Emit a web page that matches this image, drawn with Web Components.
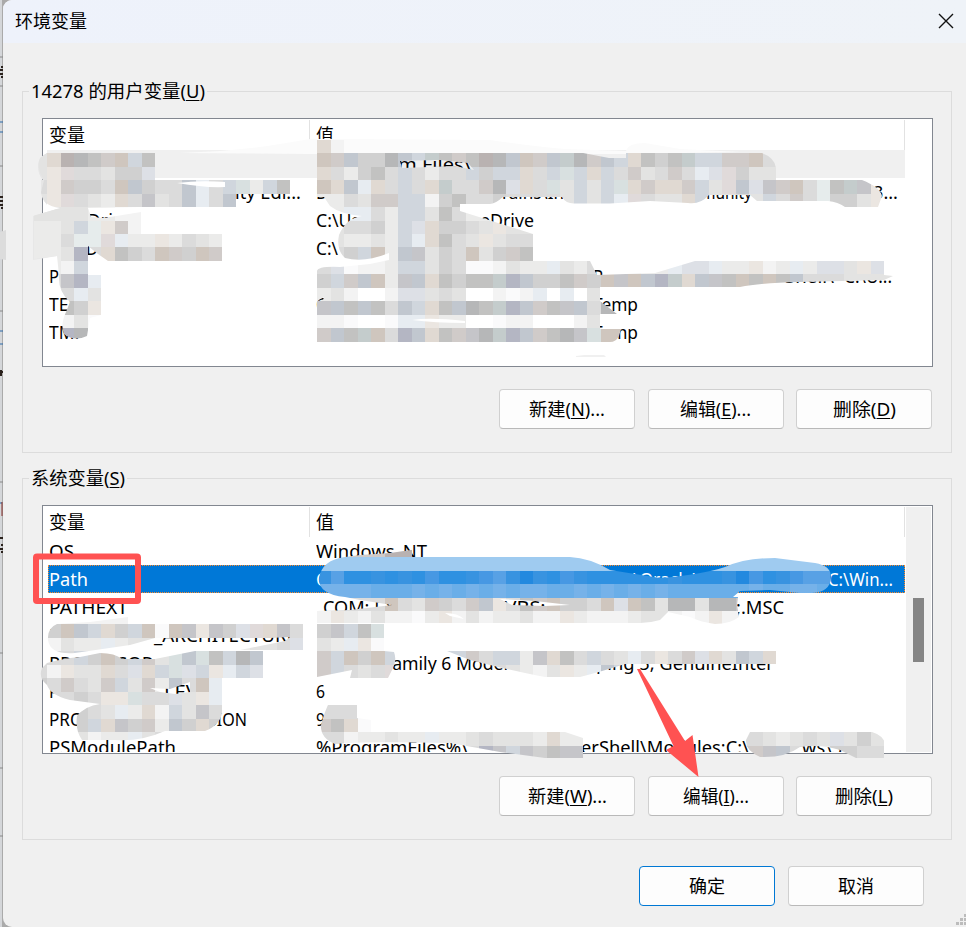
<!DOCTYPE html>
<html lang="zh-CN">
<head>
<meta charset="utf-8">
<title>环境变量</title>
<style>
html,body{margin:0;width:966px;height:927px;overflow:hidden;background:#b9b9bb}
body{font:18px/28px "Noto Sans","Noto Sans CJK SC",sans-serif;color:#000}
</style>
</head>
<body>
<env-dialog></env-dialog>
<script>
const attach = (el, html) => { el.attachShadow({mode:'open'}).innerHTML = html; return el.shadowRoot; };

/* A run of text fitted to the width given in its w attribute. */
customElements.define('fit-text', class extends HTMLElement {
  connectedCallback() {
    if (this.shadowRoot) return;
    const root = attach(this, `<style>:host{display:block;flex:none;white-space:pre;height:28px;line-height:28px}
      span{display:inline-block;transform-origin:0 50%}</style><span><slot></slot></span>`);
    const w = parseFloat(this.getAttribute('w'));
    if (w) {
      this.style.width = w + 'px';
      const s = root.querySelector('span');
      s.style.transform = `scaleX(${w / s.getBoundingClientRect().width})`;
    }
  }
});

customElements.define('push-button', class extends HTMLElement {
  connectedCallback() {
    if (this.shadowRoot) return;
    attach(this, `<style>
      :host{display:flex;box-sizing:border-box;width:136px;height:40px;border:1px solid #d0d0d0;border-bottom-color:#b9b9b9;border-radius:4px;background:#fdfdfd;align-items:center;justify-content:center}
      :host([primary]){border-color:#0078d4}
      u{text-decoration-thickness:1px;text-underline-offset:2px}
      </style><fit-text w="${this.getAttribute('w')}">${this.getAttribute('label')}${this.hasAttribute('key') ? `(<u>${this.getAttribute('key')}</u>)` : ''}${this.getAttribute('tail') || ''}</fit-text>`);
  }
});

/* Titled frame. */
customElements.define('group-box', class extends HTMLElement {
  connectedCallback() {
    if (this.shadowRoot) return;
    attach(this, `<style>
      :host{display:block;box-sizing:border-box;height:387px;padding-top:13px}
      .frame{box-sizing:border-box;height:362px;border:1px solid #dcdcdc;padding:0 19px}
      .legend{display:flex;width:fit-content;height:28px;margin:-15px 0 0 -13px;padding:0 2px 0 2px;background:#f0f0f0}
      .list{margin-top:13px;height:249px;display:block}
      .frame{display:flow-root}
      .buttons{display:flex;gap:12.5px;justify-content:flex-end;margin-top:22px}
      u{text-decoration-thickness:1px;text-underline-offset:2px}
      </style><div class="frame"><div class="legend"><fit-text w="${this.getAttribute('w')}">${this.getAttribute('label')}(<u>${this.getAttribute('key')}</u>)</fit-text></div>
      <div class="list"><slot></slot></div><div class="buttons"><slot name="buttons"></slot></div></div>`);
  }
});

/* Cells are lists of fragments: [left edge, text, width]. */
const USER_ROWS = [
  {hot:1, f:[[399,'m Files\\',73],[609,'ID',18]]},
  {f:[[236,'ity Edi...',66],[317,'D',12],[503,'rains\\In',62],[702,'munity',51],[874,'3...',25]]},
  {f:[[88,'Dri',26],[317,'C:\\Us',44],[481,'eDrive',54]]},
  {f:[[87,'D',12],[317,'C:\\',22]]},
  {f:[[50,'P',10],[594,'P',10],[786,'Shell\\',49],[845,'C:\\U...',48]]},
  {f:[[50,'TEMP',46],[317,'C',11],[594,'Temp',45]]},
  {f:[[50,'TMP',36],[594,'Temp',45]]}
];
const SYS_ROWS = [
  {f:[[50,'OS',25],[317,'Windows_NT',111]]},
  {sel:1,f:[[50,'Path',39],[317,'C',11],[634,'\\Oracle\\',66],[829,'C:\\Win...',65]]},
  {f:[[50,'PATHEXT',79],[320,'.COM;.EX',76],[496,';.VBS;.',56],[737,';.MSC',48]]},
  {f:[[50,'P',10],[155,'_ARCHITECTURE',143]]},
  {f:[[50,'PROCESSOR',104],[384,'Family 6 Model',125],[597,'ping 5, GenuineIntel',175]]},
  {f:[[50,'P',10],[165,'LEV',34],[317,'6',9]]},
  {f:[[50,'PROC',45],[209,'SION',39],[317,'9',9]]},
  {f:[[50,'PSModulePath',127],[317,'%ProgramFiles%\\',152],[582,'erShell\\Modules;C:\\',168],[803,'ws\\S',40]]}
];

customElements.define('variable-list', class extends HTMLElement {
  connectedCallback() {
    if (this.shadowRoot) return;
    const sys = this.getAttribute('kind') === 'system';
    const row = r => {
      let x = 43.6;
      return `<div class="row ${r.hot ? 'hot' : ''} ${r.sel ? 'sel' : ''}">` + r.f.map(([l, t, w]) => {
        const m = l - x; x = l + w;
        return `<fit-text w="${w}" style="margin-left:${m}px">${t}</fit-text>`;
      }).join('') + '</div>';
    };
    attach(this, `<style>
      :host{display:flex;box-sizing:border-box;width:891px;height:249px;border:1px solid #828790;background:#fff;overflow:hidden}
      .main{width:862px;height:247px;overflow:hidden}
      .head{display:grid;grid-template-columns:260px 1fr;height:30px;margin-top:1px;line-height:30px;padding-left:6px;border-right:1px solid #e2e2e2;box-sizing:border-box}
      .head div+div{border-left:1px solid #e2e2e2;padding-left:6px}
      .head div{height:30px}
      .rows{height:215px;overflow:hidden}
      .row{display:flex;height:28px;width:862px}
      .hot{background:linear-gradient(90deg,transparent 4px,#f0f0f0 4px)}
      .sel{color:#fff;background:linear-gradient(90deg,transparent 5px,#0078d7 5px);position:relative}
      .sel::after{content:"";position:absolute;inset:0 0 0 5px;border:1px dotted #ff8a28}
      .bar{width:25px;height:245px;margin:1px 0 0 1px;background:#f0f0f0;display:flex;justify-content:center}
      .thumb{width:11px;height:64px;background:#858585;margin:91px 0 0 0}
      </style><div class="main"><div class="head"><div>变量</div><div>值</div></div><div class="rows">${(sys ? SYS_ROWS : USER_ROWS).map(row).join('')}</div></div>
      ${sys ? '<div class="bar"><div class="thumb"></div></div>' : ''}`);
  }
});

/* Mosaic brush strokes over private values, and the red markers. */
const PAL = {a:'#c2c2c1',b:'#b6b7b8',c:'#c5c5c9',d:'#d0d0d0',e:'#dbdbdb',f:'#e3e3e2',g:'#ebebea',h:'#f3f3f3',i:'#fafafb',w:'#ffffff',
  t:'#cfc6be',u:'#e0d9d2',v:'#ebe6e1',p:'#b9b2b1',q:'#d0cbc9',r:'#e0dada',
  B:'#b4b6c3',C:'#c1c7cf',D:'#d0d6dd',E:'#dde0e6',F:'#e7ecf1',G:'#c4cccc',H:'#d8e0e0',K:'#e6ecec',
  0:'#9fcbf0',1:'#3893e0',2:'#58a1e5',3:'#2f91e1',4:'#2389df',5:'#6aaee8',6:'#76b2e9',7:'#4798e3'};
const TILES = [
  [0,-1,'fupbaqtDa'],[1,-1,'fvreefddE'],[2,-1,'evqddetCdeeCFeDHgDa'],[3,-1,'fvrefguecfeCFeC'],[4,-1,'ffffgghh'],
  [5,-1,'ggfDKvqh'],[6,-1,'ggeKKrFggvgefg'],[7,-1,'ggfBeuadetqdtq'],[8,0,'ghDh'],[9,0,'ecBF'],[10,0,'eeFf'],[11,0,'eadv'],[12,0,'ihfi'],[13,0,'eBb'],
  [-1,20,'uh'],[0,20,'tqCddbCDGaqapbCtqCGbqCDuadaGDDqqte'],
  [1,20,'uegdaeDegeeDdDDueDHDuDeqfeqeFErdff'],
  [2,20,'tuCFueDeuGeeqbEueHfDfDHuquuqDfrCEcqteKaGcv'],
  [3,20,'ggefqqDDhdaeedeeeefDfDFreffuDffefDeqeKddfv'],
  [4,20,'ggFFegDDfaegg'],[5,20,'ffeedgDEuddefvffh'],[6,20,'ffggfgDFuaefvfeei'],[7,20,'eedDtgCcfdetfdqai'],
  [8,20,'eEihhgDDfdeiihfggFfgefffggFEEFggvhgFgEEfvE'],
  [9,20,'dDqCtgcCuadaaGBCddaqdtctCBGuCcatataCeeeffff'],
  [10,20,'gfhwwhEEfefwwhihFwFwfff'],[11,20,'cCaCaeCDuaCbaGBCqacCebb'],[12,20,'hhiwwiFFvggwwihhwwwhf'],[13,20,'qCaGteBCuaqcbGBCqabcHtt'],
  [34,-1,'hhhhhhh'],[35,-1,'ddtCDudDtitcvcdEruceE'],[36,-1,'hhfggFgffhhgfefgffeE'],
  [37,-1,'eeeDdtdDqfHCHaDbC'],[38,-1,'ehvffueEuDHEDvFDE'],[39,-1,'deqefqDfqgCetF'],[40,-1,'eeedevvHeeEfvF'],[41,-1,'eeedefFguhDfce'],[42,-1,'eeedDucdqgCdud'],[43,-1,'eeefhggFfefgg'],
  [29,22,'qqqpp'],[30,20,'0000000000000000000000000000000000000000'],[31,20,'1233131373317214137133333313331473172213'],[32,20,'6666555656565656655656565655555565566563'],
  [33,20,'eeeeetefqdeqCveaqtddetEtafbbfbbce'],[34,20,'hvghfhhigvhfhggfhhvghhhgffhihvhhh'],
  [35,20,'dcDaH'],[36,20,'fgFvi'],[37,20,'qDtdtDDdDDDqeDDgcuaeDefFeveqEufCDu'],[38,20,'qDeferDDeeeeeefghfvgFCDgeefeeeeeee'],
  [41,20,'eeei'],[42,20,'qauiii'],[43,20,'eehggfggFggfefffgugg'],[44,20,'eeeeeeeeeeeeBcDcdacc'],
  [41,51,'g'],[43,51,'eefgfefEfdf'],[44,51,'qqcCefgddee'],[45,51,'qqccefgddee']
];
const STROKES = [
  'M47 153H155V180H290V194H302V195H239L238 207H140L88 208L91 217L104 218L141 212V234H222V261H108L98 254L88 246V275H101V315L90 318L87 336Q74 342 64 334Q60 325 66 312L70 302Q58 292 59 275L57 256L33 259V216L60 208Q42 206 41 192L44 180Q36 168 40 158Z',
  'M317 137L344 137V153H762Q775 158 776 168V180H862Q880 187 882 196L878 207H845Q838 202 828 201H757L750 195H709Q700 205 688 203L650 201L610 203.500H575Q566 204 562 197H503Q495 204 490 204H460V211L533 234V261H590L597 275L655 273L695 261H884V275L893 276L884 280L800 282Q760 283 740 287H600V301L617 314H600V329H621L619 336Q616 342 610 342H317V301L323 300L324 297L317 301V271Q318 266 340 267L370 264L389 260V253Q365 263 345 258Q336 250 339 235Q346 218 362 216Q340 214 330 206L324 197H317ZM400 161L440 160L468 163L474 170L455 166L402 168ZM578 152H626V158H609Z',
  'M57 624L90 622L128 617V624H303V650H240L285 641L290 637L270 638H155L130 645L75 653Q50 655 48 640Q47 628 57 624Z',
  'M47 663Q65 658 80 657L100 653Q115 653 122 659H155L195 651H263V678H222V713Q220 725 205 731H165Q140 742 115 740H82Q75 730 77 716Q85 706 100 704L70 700Q50 695 47 685Q38 678 42 668ZM150 688L170 689L190 682V692L175 694L160 692Z',
  'M360 555L390 553L425 548V557H570Q590 558 610 570L660 578Q700 575 725 567Q745 558 775 558L815 563Q832 566 831 578Q830 592 812 593H800L770 590L740 591L733 597H738L737 605L739 617Q730 624 715 624Q700 622 690 617L668 612L660 620Q650 623 640 623H317V611L350 610L392 605L360 600L345 597Q318 594 319 578Q322 560 345 557ZM500 599L535 601L570 605L545 606L512 605Z',
  'M317 624H384V651L394 652Q397 660 393 668L388 678H350L352 670L317 677Z',
  'M447 651H776V664H625Q600 672 580 677H545Q510 670 490 665L470 660Z',
  'M330 701L331 705H357V718L371 720V732H565L583 738V758H545L500 752L450 743Q360 741 335 744Q320 738 321 725Q325 710 330 701Z',
  'M750 732H872Q883 735 886 745L897 758H856L840 750Q820 744 800 747Q785 758 760 757Q745 750 746 740Z'
];
customElements.define('brush-layer', class extends HTMLElement {
  connectedCallback() {
    if (this.shadowRoot) return;
    const X = n => Math.round(47 + 13.5 * n), Y = n => Math.round(153.2 + 13.465 * n);
    let t = '';
    for (const [m, c, s] of TILES) [...s].forEach((k, i) => {
      t += `<rect x="${X(c + i)}" y="${Y(m)}" width="${X(c + i + 1) - X(c + i)}" height="${Y(m + 1) - Y(m)}" fill="${PAL[k]}"/>`;
    });
    attach(this, `<style>:host{position:absolute;inset:0;pointer-events:none}svg{display:block}</style>
      <svg width="966" height="927" viewBox="0 0 966 927">
      <defs><clipPath id="brush">${STROKES.map(d => `<path clip-rule="evenodd" d="${d}"/>`).join('')}</clipPath></defs>
      <path d="M180 153Q240 151 280 144L310 139H344L490 140Q530 146 565 149L626 151Q628 143 645 143L680 149L740 152L626 154H310Z" fill="#fbfbfb"/>
      <path d="M33 216L57 209V256L33 260Z" fill="#e7e7e7"/><path d="M0 232L6 230V260L0 259Z" fill="#dcdcdc"/>
      <path d="M38 166Q38 157 47 153V180H43Q38 175 38 166ZM48 180H41Q40 198 47 205Z" fill="#e6e6e6"/>
      <g clip-path="url(#brush)" shape-rendering="crispEdges">${t}</g>
      <path d="M177 183Q200 180 225 182V187Q205 188 177 183ZM412 320Q430 317 465 321V323Q435 323 412 320ZM445 613Q458 613 464 619L450 616Z" fill="#fff"/>
      <path d="M576 356L584 355H604L606 357H576Z" fill="#f0f0f0"/>
      <rect x="36" y="556.500" width="102" height="44.500" rx="1" fill="none" stroke="#ff5252" stroke-width="6"/>
      <path d="M637 669L640 669L685 741L692.500 735L698.500 777L666 750L673.500 746Z" fill="#ff5252"/>
      </svg>`);
  }
});

customElements.define('env-dialog', class extends HTMLElement {
  connectedCallback() {
    attach(this, `<style>
      :host{display:block;position:relative;width:966px;height:927px;overflow:hidden;background:linear-gradient(90deg,#d4d6d9 0 2px,#aaa 2px)}
      .edge{position:absolute;left:0;top:0}
      .win{position:relative;box-sizing:border-box;margin-left:3px;width:963px;height:927px;background:#f0f0f0;border-radius:9px 0 0 9px;overflow:hidden}
      header{display:flex;justify-content:space-between;align-items:center;height:43px;background:linear-gradient(90deg,#eef2fb,#eff3f8);padding:0 11px 0 12px;box-sizing:border-box}
      header fit-text{margin-top:-2px}
      header svg{margin-top:-2px}
      main{padding:35px 14px 0 19px}
      footer{display:flex;gap:13px;justify-content:flex-end;padding:14px 42px 0 0}
      .grip{position:absolute;right:0;bottom:0}
      </style>
      <svg class="edge" width="3" height="927"><path d="M1 67H3M0 70H3M0 74H3M1 77H3M0 197H3M0 201H3M0 205H3M1 208H3M0 372H3M1 370V376M0 538H3M1 545H3M0 549H3M1 552H3" stroke="#2a211c" stroke-width="2"/><path d="M0 122H3M0 132H3M0 331H3M0 344H3M0 503H2" stroke="#2868a8"/><path d="M2 502V516" stroke="#822b26"/><path d="M0 57H3M0 86H3M0 166H3M0 311H3M0 482H3M0 653H3M0 768H3M0 836H3" stroke="#888"/></svg>
      <div class="win">
      <header><fit-text w="72">环境变量</fit-text><svg width="18" height="18" viewBox="0 0 18 18"><path d="M2 2L16 16M16 2L2 16" stroke="#111" stroke-width="1.400"/></svg></header>
      <main>
        <group-box label="14278 的用户变量" key="U" w="174"><variable-list kind="user"></variable-list>
          <push-button slot="buttons" label="新建" key="N" tail="..." w="76"></push-button><push-button slot="buttons" label="编辑" key="E" tail="..." w="71"></push-button><push-button slot="buttons" label="删除" key="D" w="63"></push-button></group-box>
        <group-box label="系统变量" key="S" w="94"><variable-list kind="system"></variable-list>
          <push-button slot="buttons" label="新建" key="W" tail="..." w="79"></push-button><push-button slot="buttons" label="编辑" key="I" tail="..." w="66"></push-button><push-button slot="buttons" label="删除" key="L" w="58"></push-button></group-box>
      </main>
      <footer><push-button primary label="确定" w="36"></push-button><push-button label="取消" w="36"></push-button></footer>
      <svg class="grip" width="10" height="13"><path d="M8 0h2v3h-2zM4 4h3v3h-3zM8 4h2v3h-2zM0 8h3v3h-3zM4 8h3v3h-3zM8 8h2v3h-2z" fill="#bcbcbc"/></svg>
      </div><brush-layer></brush-layer>`);
  }
});
</script>
</body>
</html>
